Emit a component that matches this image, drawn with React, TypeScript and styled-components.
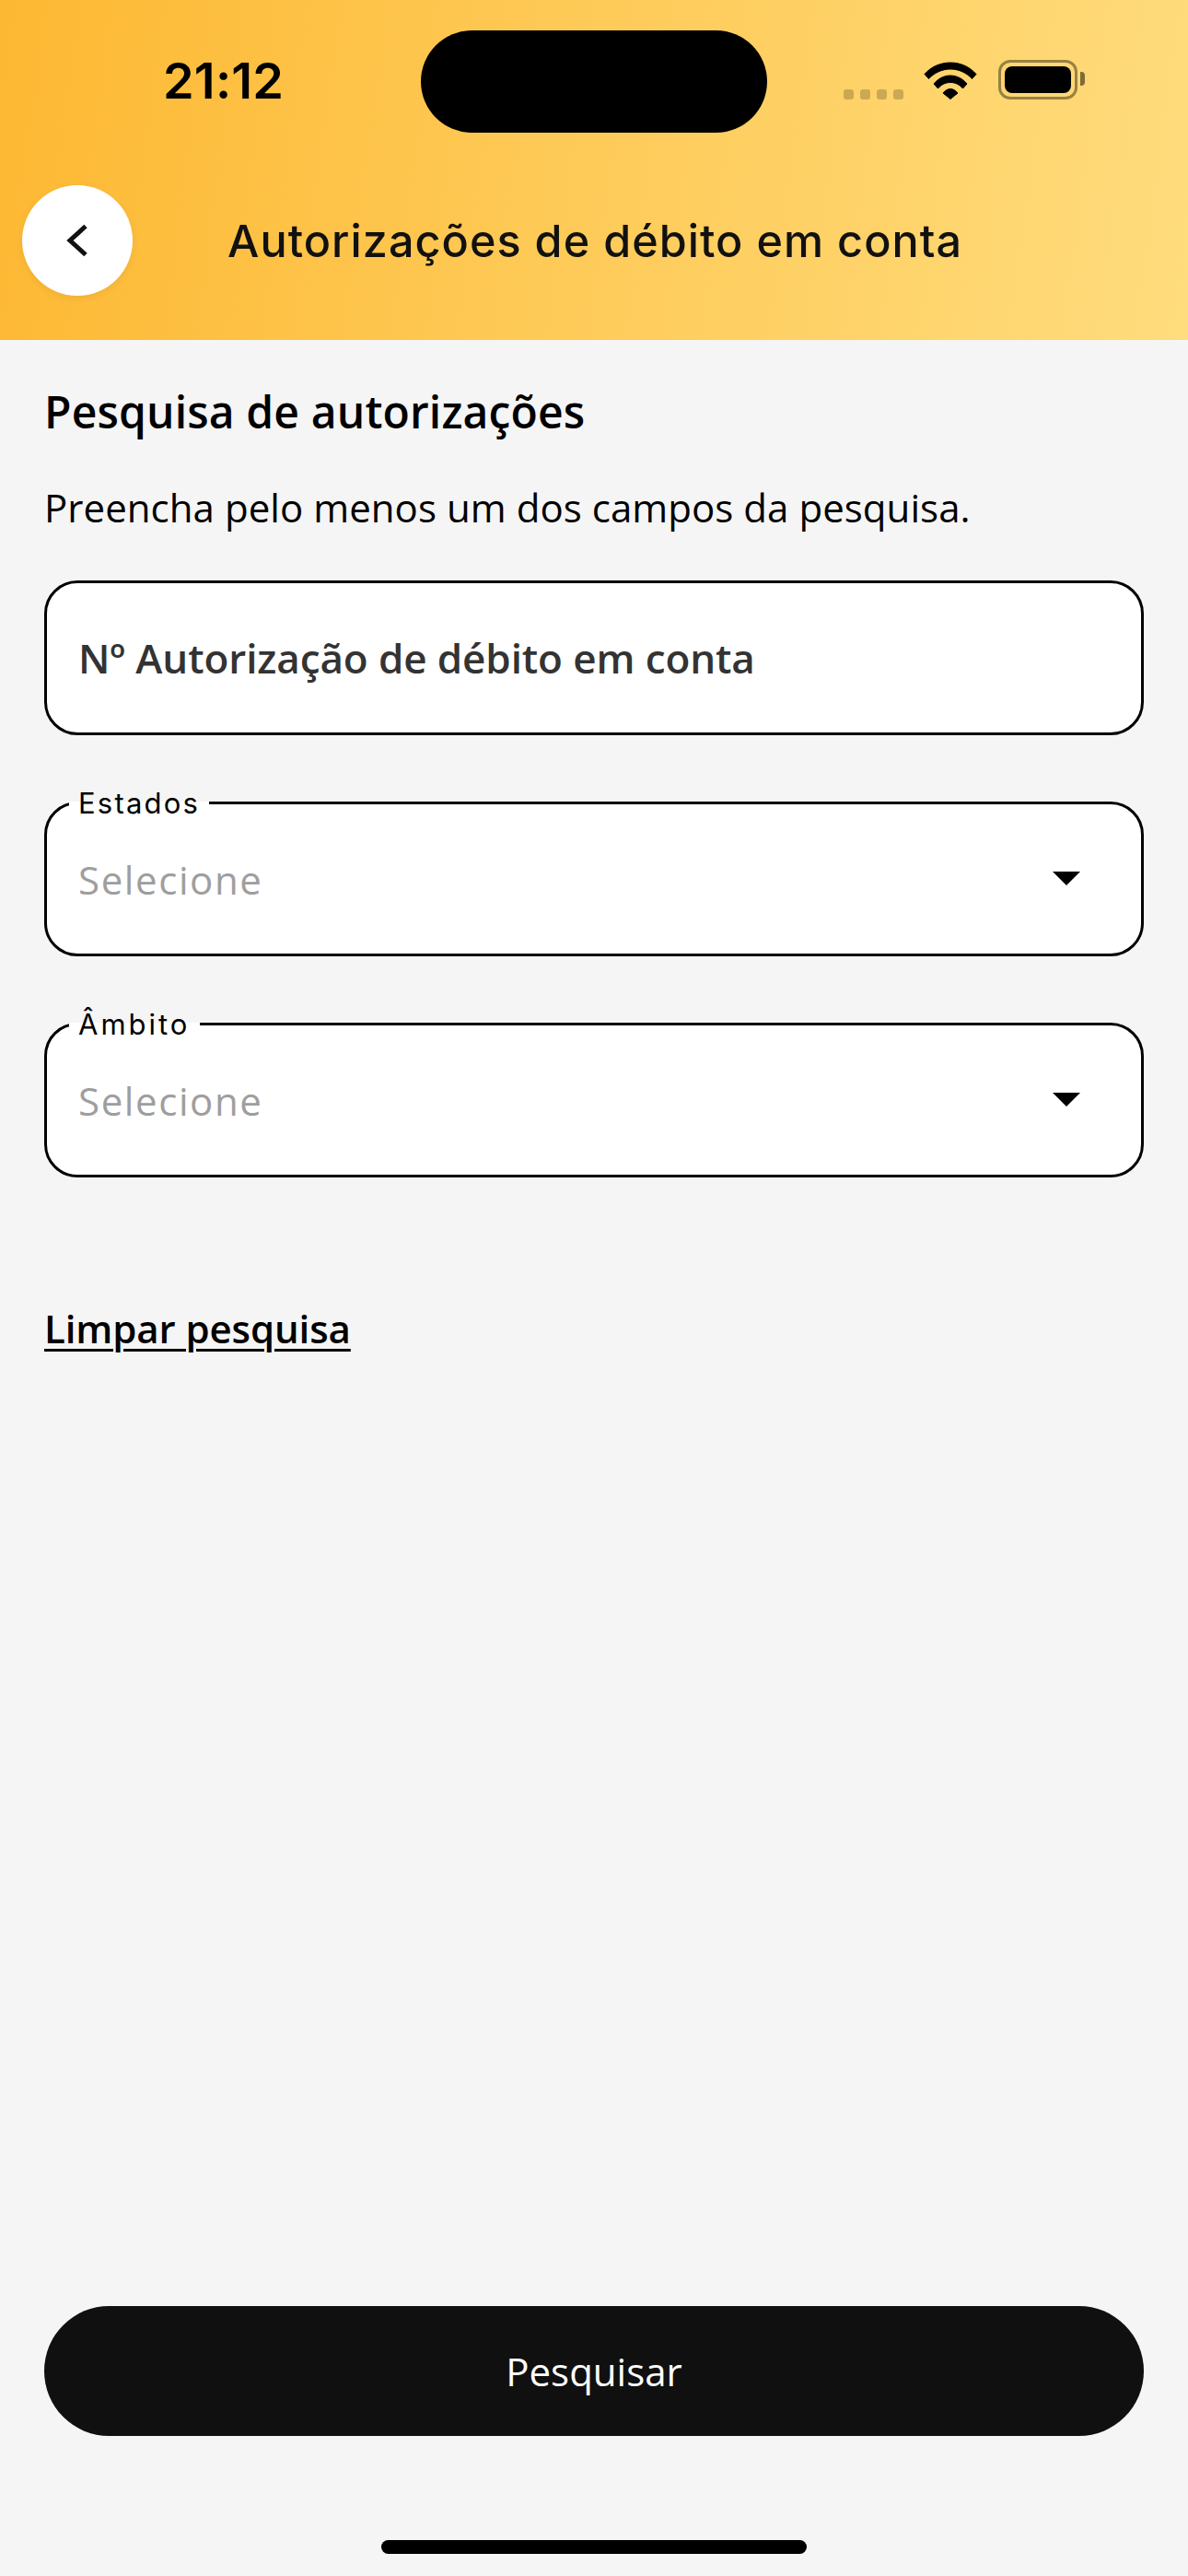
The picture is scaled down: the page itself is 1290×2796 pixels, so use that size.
import React from "react";
import styled, { createGlobalStyle } from "styled-components";

const Global = createGlobalStyle`
  html, body { margin: 0; padding: 0; background: #f5f5f5; }
  * { box-sizing: border-box; }
`;

const Page = styled.div`
  width: 1290px;
  height: 2796px;
  display: flex;
  flex-direction: column;
  background: #f5f5f5;
  font-family: "Open Sans", sans-serif;
  color: #000;
  overflow: hidden;
`;

const Header = styled.header`
  height: 369px;
  flex: none;
  background: linear-gradient(98deg, #fdb832 0%, #fecb59 50%, #ffdc7d 100%);
`;

const StatusBar = styled.div`
  display: flex;
  align-items: center;
  height: 111px;
  margin-top: 33px;
`;

const TimeSlot = styled.div`
  width: 457px;
  padding: 0 0 2px 177px;
`;

const Time = styled.span`
  font-family: Inter, sans-serif;
  font-weight: 600;
  font-size: 54px;
  line-height: 1;
  color: #000;
  letter-spacing: 0.2px;
`;

const Island = styled.div`
  width: 376px;
  height: 111px;
  border-radius: 56px;
  background: #000;
`;

const StatusIcons = styled.div`
  display: flex;
  align-items: flex-end;
  margin: 0 0 4px 83px;
`;

const Dots = styled.div`
  display: flex;
  gap: 7px;
  margin-right: 22px;
`;

const Dot = styled.span`
  width: 11px;
  height: 11px;
  border-radius: 3px;
  background: rgba(0, 0, 0, 0.2);
`;

const Battery = styled.div`
  position: relative;
  width: 86px;
  height: 43px;
  margin-left: 23px;
  padding: 4px;
  border: 3.5px solid rgba(0, 0, 0, 0.4);
  border-radius: 13px;

  &::after {
    content: "";
    position: absolute;
    right: -11px;
    top: 10px;
    width: 5px;
    height: 15px;
    border-radius: 0 4px 4px 0;
    background: rgba(0, 0, 0, 0.5);
  }
`;

const BatteryFill = styled.div`
  width: 100%;
  height: 100%;
  border-radius: 8px;
  background: #000;
`;

const NavRow = styled.div`
  display: flex;
  align-items: center;
  padding-left: 24px;
  margin-top: 57px;
`;

const BackButton = styled.div`
  display: flex;
  align-items: center;
  justify-content: center;
  width: 120px;
  height: 120px;
  border-radius: 50%;
  background: #fff;
  box-shadow: 0 3px 8px rgba(0, 0, 0, 0.06);
`;

const Title = styled.h1`
  margin: 2px 0 0 103px;
  font-family: Inter, sans-serif;
  font-weight: 500;
  font-size: 48.5px;
  line-height: 56px;
  letter-spacing: 1.05px;
  color: #111;
  white-space: nowrap;
`;

const Main = styled.main`
  flex: 1;
  display: flex;
  flex-direction: column;
  padding: 0 48px;
`;

const Heading = styled.h2`
  margin: 43px 0 0;
  font-weight: 600;
  font-size: 48px;
  line-height: 70px;
  letter-spacing: 0.15px;
  color: #000;
`;

const Hint = styled.p`
  margin: 41px 0 0;
  font-weight: 400;
  font-size: 42px;
  line-height: 56px;
  letter-spacing: 0.05px;
  color: #000;
`;

const Field = styled.div<{ $gap: number }>`
  position: relative;
  display: flex;
  align-items: center;
  justify-content: space-between;
  height: 168px;
  margin-top: ${(p) => p.$gap}px;
  padding: 0 33px 0 34px;
  border: 3px solid #000;
  border-radius: 36px;
  background: #fff;
`;

const FieldText = styled.span`
  font-weight: 600;
  font-size: 44px;
  letter-spacing: -0.1px;
  color: #333;
`;

const FieldLabel = styled.span<{ $width: number; $spacing: number }>`
  position: absolute;
  left: 24px;
  top: -18px;
  width: ${(p) => p.$width}px;
  padding-left: 10px;
  font-family: Inter, sans-serif;
  font-weight: 400;
  font-size: 31px;
  line-height: 34px;
  letter-spacing: ${(p) => p.$spacing}px;
  color: #000;
  background: linear-gradient(#f5f5f5 0, #f5f5f5 15px, #fff 15px, #fff 100%);
`;

const Placeholder = styled.span`
  font-weight: 400;
  font-size: 42px;
  letter-spacing: 1.6px;
  color: #9e9e9e;
`;

const Caret = styled.svg`
  width: 30px;
  height: 15px;
  margin-right: 33px;
  margin-top: -1px;
`;

const ClearLink = styled.a`
  align-self: flex-start;
  margin-top: 135px;
  font-weight: 600;
  font-size: 42px;
  line-height: 58px;
  letter-spacing: -0.1px;
  color: #000;
  text-decoration: underline;
  text-decoration-thickness: 3px;
  text-underline-offset: 6px;
`;

const Spacer = styled.div`
  flex: 1;
`;

const SearchButton = styled.div`
  display: flex;
  align-items: center;
  justify-content: center;
  height: 141px;
  border-radius: 71px;
  background: #101010;
  color: #fff;
  font-weight: 500;
  font-size: 42px;
`;

const HomeBar = styled.div`
  align-self: center;
  width: 462px;
  height: 15px;
  margin: 113px 0 24px;
  border-radius: 8px;
  background: #000;
`;

const WifiIcon = () => (
  <svg width="58" height="41" viewBox="0 0 58 41" fill="#000" stroke="#000" strokeWidth="1" strokeLinejoin="round">
    <path d="M1 13.5C8 5.5 18 1 29 1s21 4.5 28 12.5l-4.5 5C46.5 12 38 8 29 8s-17.5 4-23.5 10.5z" />
    <path d="M11 24C15.5 18.5 22 15 29 15s13.500 3.500 18 9l-4.500 5C39 25 34.500 22.500 29 22.500S19 25 15.500 29z" />
    <path d="M21 34c2-2.500 5-4.500 8-4.500s6 2 8 4.500l-8 6.500z" />
  </svg>
);

const BackChevron = () => (
  <svg width="24" height="36" viewBox="0 0 24 36" fill="none" stroke="#111" strokeWidth="5">
    <polyline points="21,2.500 4,18 21,33.500" />
  </svg>
);

const DownCaret = () => (
  <Caret viewBox="0 0 30 15">
    <polygon points="0,0 30,0 15,15" fill="#000" />
  </Caret>
);

export default function App() {
  return (
    <Page>
      <Global />
      <Header>
        <StatusBar>
          <TimeSlot>
            <Time>21:12</Time>
          </TimeSlot>
          <Island />
          <StatusIcons>
            <Dots>
              <Dot />
              <Dot />
              <Dot />
              <Dot />
            </Dots>
            <WifiIcon />
            <Battery>
              <BatteryFill />
            </Battery>
          </StatusIcons>
        </StatusBar>
        <NavRow>
          <BackButton>
            <BackChevron />
          </BackButton>
          <Title>Autorizações de débito em conta</Title>
        </NavRow>
      </Header>
      <Main>
        <Heading>Pesquisa de autorizações</Heading>
        <Hint>Preencha pelo menos um dos campos da pesquisa.</Hint>
        <Field $gap={51}>
          <FieldText>Nº Autorização de débito em conta</FieldText>
        </Field>
        <Field $gap={72}>
          <FieldLabel $width={152} $spacing={2.2}>Estados</FieldLabel>
          <Placeholder>Selecione</Placeholder>
          <DownCaret />
        </Field>
        <Field $gap={72}>
          <FieldLabel $width={142} $spacing={3}>Âmbito</FieldLabel>
          <Placeholder>Selecione</Placeholder>
          <DownCaret />
        </Field>
        <ClearLink>Limpar pesquisa</ClearLink>
        <Spacer />
        <SearchButton>Pesquisar</SearchButton>
        <HomeBar />
      </Main>
    </Page>
  );
}
